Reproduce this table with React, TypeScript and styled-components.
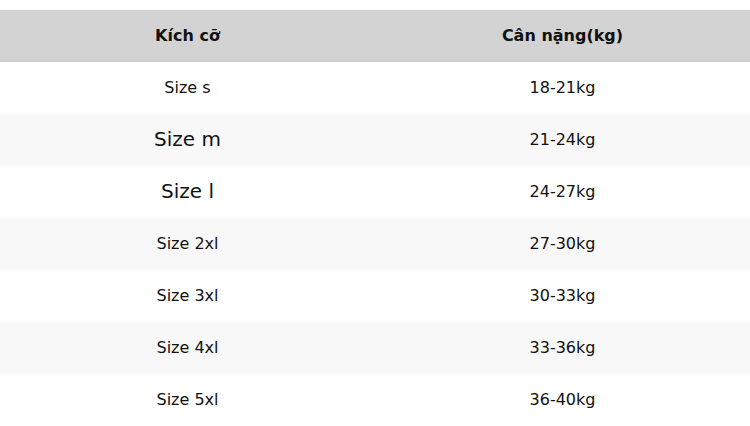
import React from "react";
import styled, { createGlobalStyle } from "styled-components";

const Global = createGlobalStyle`
  html, body { margin: 0; padding: 0; background: #fff; }
  body { font-family: "DejaVu Sans", "Noto Sans", sans-serif; color: #111; }
`;

const Page = styled.div`
  padding-top: 10px;
`;

const Table = styled.div`
  display: grid;
  grid-template-columns: 1fr 1fr;
  width: 750px;
`;

const HeadCell = styled.div`
  height: 52px;
  box-sizing: border-box;
  padding-bottom: 2px;
  display: flex;
  align-items: center;
  justify-content: center;
  background: #d3d3d3;
  font-weight: bold;
  font-size: 16px;
  color: #111;
  box-shadow: inset 0 1px 0 #cecece, inset 0 -2px 0 #cecece;
`;

const Cell = styled.div<{ $alt: boolean; $big?: boolean }>`
  height: 52px;
  box-sizing: border-box;
  padding-bottom: 2px;
  display: flex;
  align-items: center;
  justify-content: center;
  background: ${(p) => (p.$alt ? "#f8f8f8" : "#ffffff")};
  font-size: ${(p) => (p.$big ? "20px" : "16px")};
  color: #111;
`;

const rows: { size: string; weight: string; big?: boolean }[] = [
  { size: "Size s", weight: "18-21kg" },
  { size: "Size m", weight: "21-24kg", big: true },
  { size: "Size l", weight: "24-27kg", big: true },
  { size: "Size 2xl", weight: "27-30kg" },
  { size: "Size 3xl", weight: "30-33kg" },
  { size: "Size 4xl", weight: "33-36kg" },
  { size: "Size 5xl", weight: "36-40kg" },
];

export default function App() {
  return (
    <>
      <Global />
      <Page>
        <Table>
          <HeadCell>Kích cỡ</HeadCell>
          <HeadCell>Cân nặng(kg)</HeadCell>
          {rows.map((r, i) => (
            <React.Fragment key={r.size}>
              <Cell $alt={i % 2 === 1} $big={r.big}>{r.size}</Cell>
              <Cell $alt={i % 2 === 1}>{r.weight}</Cell>
            </React.Fragment>
          ))}
        </Table>
      </Page>
    </>
  );
}
